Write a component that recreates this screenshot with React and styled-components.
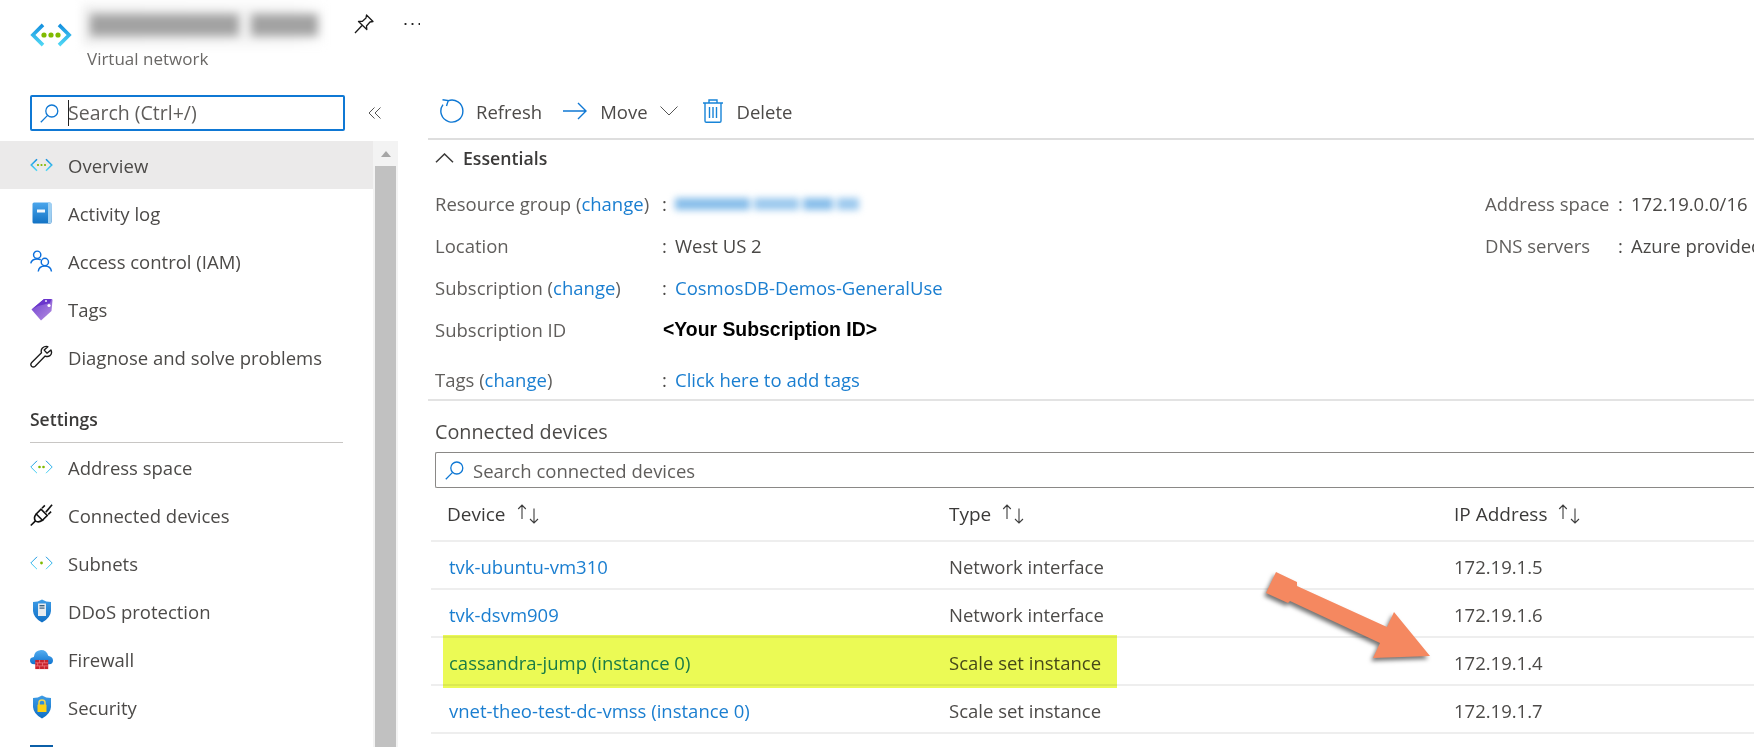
import React from "react";
import styled, { createGlobalStyle } from "styled-components";

const GlobalStyle = createGlobalStyle`
  html, body {
    margin: 0;
    padding: 0;
    background: #fff;
  }
  body {
    font-family: "Open Sans", "Noto Sans", Arial, sans-serif;
    font-size: 18.5px;
    color: #484644;
  }
  * {
    box-sizing: border-box;
  }
`;

const BLUE = "#1a7ed0";

function NetIcon({ width = 23, height = 14, weight = 1.5, dots = 3, dotSize = 1.2, spread = 4 }) {
  const id = `net-${width}-${dots}-${weight}`;
  const w = width;
  const h = height;
  const reach = h / 2;
  const offsets = dots === 3 ? [-spread, 0, spread] : dots === 2 ? [-spread / 2, spread / 2] : [0];
  const inset = weight * 0.8;
  return (
    <svg width={w} height={h} viewBox={`0 0 ${w} ${h}`}>
      <defs>
        <linearGradient id={id} x1="0" y1="0" x2="0" y2="1">
          <stop offset="0" stopColor="#1490df" />
          <stop offset="1" stopColor="#50d8f5" />
        </linearGradient>
      </defs>
      <path
        d={`M${reach} ${inset} L${inset} ${reach} L${reach} ${h - inset}`}
        fill="none"
        stroke={`url(#${id})`}
        strokeWidth={weight}
      />
      <path
        d={`M${w - reach} ${inset} L${w - inset} ${reach} L${w - reach} ${h - inset}`}
        fill="none"
        stroke={`url(#${id})`}
        strokeWidth={weight}
      />
      {offsets.map((o) => (
        <circle key={o} cx={w / 2 + o} cy={reach} r={dotSize} fill="#7fba00" />
      ))}
    </svg>
  );
}

function BookIcon() {
  return (
    <svg width="20" height="22" viewBox="0 0 20 22">
      <defs>
        <linearGradient id="book" x1="0" y1="0" x2="0" y2="1">
          <stop offset="0" stopColor="#4ba6ec" />
          <stop offset="1" stopColor="#1272c4" />
        </linearGradient>
      </defs>
      <rect x="0.5" y="0.5" width="19" height="21" rx="1.5" fill="url(#book)" />
      <rect x="16" y="1" width="3" height="20" fill="#9fd0f2" />
      <rect x="5" y="7.5" width="8" height="3" fill="#f2f8fd" />
    </svg>
  );
}

function PeopleIcon() {
  return (
    <svg width="24" height="24" viewBox="0 0 24 24" fill="none" stroke="#0b6fdc" strokeWidth="1.5">
      <circle cx="7.5" cy="5.5" r="3.8" />
      <path d="M0.8 14.5c.6-3 3.2-4.6 6.7-4.6 1.4 0 2.7.3 3.7.8" />
      <circle cx="15.5" cy="13" r="3.8" />
      <path d="M8.6 23c.4-3.6 3.2-5.8 6.9-5.8s6.5 2.2 6.9 5.8" />
    </svg>
  );
}

function TagIcon() {
  return (
    <svg width="22" height="23" viewBox="0 0 22 23">
      <defs>
        <linearGradient id="tag" x1="0" y1="0" x2="1" y2="1">
          <stop offset="0" stopColor="#6f3fd0" />
          <stop offset="1" stopColor="#b58ee0" />
        </linearGradient>
      </defs>
      <path d="M0.5 11.5 L13 1 L20.5 1 Q21.5 1 21.5 2 L20.5 13 L10 22.5 Z" fill="url(#tag)" />
      <path d="M0.5 11.5 L13 1 L20.5 1 L19 5 L7 8 Z" fill="#6a35cc" />
      <circle cx="18" cy="7.5" r="1.6" fill="#fff" />
      <circle cx="15" cy="3" r="1.1" fill="#e4d8f6" />
    </svg>
  );
}

function WrenchIcon() {
  return (
    <svg width="24" height="24" viewBox="0 0 24 24" fill="none" stroke="#1c1c1c" strokeWidth="1.4" strokeLinejoin="round">
      <path d="M18.6 1.2 L14.8 4.8 L17.8 8 L21.8 4.6 Q23.6 8.2 20.8 10.6 Q18.6 12.2 15.8 11 L5.4 21.6 Q3.4 23.2 1.6 21.6 Q0 19.8 1.8 17.8 L12 7.6 Q11 4.6 13 2.6 Q15.4 0.4 18.6 1.2 Z" />
    </svg>
  );
}

function PlugIcon() {
  return (
    <svg width="24" height="24" viewBox="0 0 24 24" fill="none" stroke="#111" strokeWidth="1.7">
      <path d="M0.8 23 L6 17.8" />
      <path d="M6.5 11 L13 17.5 Q8.5 20.5 5.6 18 Q3.4 15 6.5 11 Z" />
      <path d="M6.5 11 L11.5 6 L18 12.5 L13 17.5" />
      <path d="M16.5 9 L23 1.4" />
      <path d="M12.5 5 L15.5 2 M19 11.5 L22 8.5" />
    </svg>
  );
}

const SHIELD = "M10 0.5 Q14 3 19 3 L19 12 Q18.5 19 10 23.5 Q1.5 19 1 12 L1 3 Q6 3 10 0.5 Z";

function DdosIcon() {
  return (
    <svg width="20" height="24" viewBox="0 0 20 24">
      <defs>
        <linearGradient id="shield" x1="0" y1="0" x2="0" y2="1">
          <stop offset="0" stopColor="#3e9ce6" />
          <stop offset="1" stopColor="#0f6fc6" />
        </linearGradient>
      </defs>
      <path d={SHIELD} fill="url(#shield)" />
      <rect x="6" y="4.5" width="8" height="12.5" fill="#e6ebef" />
      <rect x="7.5" y="6" width="5" height="1.4" fill="#3b5f7c" />
      <rect x="7.5" y="8.5" width="5" height="1.2" fill="#3b5f7c" />
    </svg>
  );
}

function LockShieldIcon() {
  return (
    <svg width="20" height="24" viewBox="0 0 20 24">
      <defs>
        <linearGradient id="shield2" x1="0" y1="0" x2="0" y2="1">
          <stop offset="0" stopColor="#3e9ce6" />
          <stop offset="1" stopColor="#0f6fc6" />
        </linearGradient>
      </defs>
      <path d={SHIELD} fill="url(#shield2)" />
      <path d="M7 10 V7.5 Q7 5 10 5 Q13 5 13 7.5 V10" fill="none" stroke="#f2d64e" strokeWidth="1.5" />
      <rect x="5.5" y="9.5" width="9" height="7.5" rx="0.6" fill="#fcd116" />
    </svg>
  );
}

function FirewallIcon() {
  return (
    <svg width="24" height="21" viewBox="0 0 24 21">
      <defs>
        <linearGradient id="cloud" x1="0" y1="0" x2="0" y2="1">
          <stop offset="0" stopColor="#55aef0" />
          <stop offset="1" stopColor="#0f74d0" />
        </linearGradient>
      </defs>
      <path d="M4.5 15.5 Q0 15 0 11.5 Q0 8.5 4 8 Q4.5 1 11.5 0.5 Q17.5 0.5 19 6.5 Q24 7.5 24 11.5 Q24 15 20 15.5 Z" fill="url(#cloud)" />
      <rect x="5.5" y="11" width="13.5" height="9.5" fill="#c8232c" />
      <path d="M5.5 14 H19 M5.5 17.2 H19 M10 11 V14 M15 11 V14 M8 14 V17.2 M13 14 V17.2 M10 17.2 V20.5 M15 17.2 V20.5" stroke="#ee7d85" strokeWidth="0.8" />
    </svg>
  );
}

function SearchGlass({ size = 19 }) {
  return (
    <svg width={size} height={size} viewBox="0 0 19 19" fill="none" stroke="#0f78d4" strokeWidth="1.3">
      <circle cx="11.8" cy="7" r="6" />
      <path d="M7.6 11.4 L0.8 18.2" />
    </svg>
  );
}

function SortIcon() {
  return (
    <SortGlyph width="26" height="20" viewBox="0 0 26 20" fill="none" stroke="#3d3d3d" strokeWidth="1.1">
      <path d="M7 15 V1.5 M3.2 5 L7 1 L10.8 5" />
      <path d="M19 4.5 V19 M15 15 L19 19 L23 15" />
    </SortGlyph>
  );
}

const Page = styled.div`
  position: relative;
  width: 1754px;
  height: 747px;
  overflow: hidden;
  background: #fff;
`;

const Header = styled.header`
  display: flex;
  height: 95px;
  padding-left: 30px;
`;

const LogoSlot = styled.div`
  width: 52px;
  padding-top: 22px;
`;

const TitleBlock = styled.div`
  width: 248px;
`;

const TitleBlur = styled.div`
  display: flex;
  gap: 12px;
  height: 42px;
  margin-top: 4px;
  padding: 10px 12px 0 8px;
  background: linear-gradient(90deg, #f1f1f1, #f6f6f6 85%, #fff);
  filter: blur(5px);
`;

const Blob = styled.span`
  display: block;
  width: ${(p) => p.$w}px;
  height: ${(p) => p.$h}px;
  background: ${(p) => p.$color};
`;

const Subtitle = styled.div`
  margin: 2px 0 0 5px;
  font-size: 17px;
  line-height: 22px;
  color: #6a6866;
  white-space: nowrap;
`;

const HeaderActions = styled.div`
  display: flex;
  gap: 28px;
  padding: 14px 0 0 24px;
`;

const Dots = styled.span`
  display: block;
  width: 18px;
  height: 2px;
  margin-top: 9px;
  background: radial-gradient(circle, #222 1px, transparent 1.2px) 0 0 / 7px 2px repeat-x;
`;

const Body = styled.div`
  display: flex;
  height: 652px;
`;

const Sidebar = styled.aside`
  display: flex;
  flex-direction: column;
  width: 398px;
  flex-shrink: 0;
`;

const SearchRow = styled.div`
  display: flex;
  align-items: center;
  height: 46px;
  padding: 0 0 10px 30px;
  gap: 23px;
`;

const SearchBox = styled.div`
  display: flex;
  align-items: center;
  width: 315px;
  height: 36px;
  padding-left: 8px;
  border: 2px solid #0f78d4;
  border-radius: 2px;
  color: #5f5d5b;
  font-size: 19.5px;
  line-height: 30px;
`;

const Caret = styled.span`
  display: block;
  width: 1px;
  height: 26px;
  margin: 0 -1px 0 9px;
  background: #222;
`;

const NavWrap = styled.div`
  display: flex;
  flex: 1;
  min-height: 0;
`;

const Nav = styled.nav`
  width: 373px;
`;

const NavRow = styled.div`
  display: flex;
  align-items: center;
  height: 48px;
  padding-left: 30px;
  background: ${(p) => (p.$active ? "#ebeaea" : "transparent")};
  color: #4c4a48;
  white-space: nowrap;
`;

const NavIconSlot = styled.span`
  display: flex;
  justify-content: center;
  align-items: center;
  width: 23px;
  margin-right: 15px;
`;

const NavHeading = styled.div`
  height: 62px;
  margin: 0 30px;
  padding-top: 26px;
  border-bottom: 1px solid #c8c6c4;
  font-size: 17.5px;
  font-weight: 600;
  line-height: 24px;
  color: #3b3a39;
`;

const CutIcon = styled.span`
  display: block;
  width: 23px;
  height: 20px;
  border-top: 2px solid #0b5fa8;
  background: #1d7fd2;
`;

const ScrollTrack = styled.div`
  display: flex;
  flex-direction: column;
  align-items: center;
  width: 25px;
  background: #f3f3f3;
  padding: 0 2px;
`;

const ScrollUp = styled.div`
  height: 25px;
  padding-top: 10px;
  &::before {
    content: "";
    display: block;
    border-left: 5.5px solid transparent;
    border-right: 5.5px solid transparent;
    border-bottom: 6px solid #a6a6a6;
  }
`;

const ScrollThumb = styled.div`
  flex: 1;
  width: 100%;
  background: #c1c1c1;
`;

const Main = styled.main`
  flex: 1;
  min-width: 0;
  margin-left: 30px;
`;

const Toolbar = styled.div`
  display: flex;
  align-items: center;
  height: 45px;
  padding: 0 0 11px 12px;
  border-bottom: 2px solid #dedede;
`;

const ToolButton = styled.div`
  display: flex;
  align-items: center;
  gap: ${(p) => p.$gap || 12}px;
  margin-right: ${(p) => p.$after || 0}px;
  color: #4c4a48;
`;

const Essentials = styled.section`
  height: 261px;
  padding-left: 7px;
  border-bottom: 2px solid #e3e3e3;
`;

const EssentialsHead = styled.div`
  display: flex;
  align-items: center;
  gap: 9px;
  height: 36px;
  font-weight: 600;
  font-size: 17.7px;
  color: #3b3a39;
`;

const EssentialsBody = styled.div`
  display: flex;
  padding-top: 7px;
`;

const DetailColumn = styled.div`
  display: grid;
  grid-template-columns: ${(p) => p.$label}px 13px auto;
  grid-auto-rows: 41.75px;
  align-items: center;
  width: ${(p) => p.$width};
  white-space: nowrap;
`;

const Label = styled.div`
  color: #605e5c;
  margin-top: ${(p) => (p.$low ? "17px" : 0)};
`;

const Colon = styled.div`
  color: #4c4a48;
  margin-top: ${(p) => (p.$low ? "17px" : 0)};
`;

const Value = styled.div`
  color: #4a4846;
  margin-top: ${(p) => (p.$low ? "17px" : 0)};
`;

const BoldId = styled.div`
  grid-column: 2 / 4;
  font-family: "Liberation Sans", Arial, sans-serif;
  font-weight: 700;
  font-size: 19.4px;
  color: #000;
  margin-left: 1px;
`;

const Link = styled.span`
  color: ${BLUE};
`;

const ValueBlur = styled.div`
  display: flex;
  gap: 4px;
  filter: blur(3.5px);
  width: 195px;
`;

const Devices = styled.section`
  padding-left: 3px;
`;

const DevicesTitle = styled.div`
  height: 43px;
  padding: 19px 0 0 4px;
  line-height: 24px;
  font-size: 19.8px;
  color: #4c4a48;
  margin-bottom: 8px;
`;

const DeviceSearch = styled.div`
  display: flex;
  align-items: center;
  gap: 9px;
  height: 36px;
  margin-left: 4px;
  padding-left: 9px;
  border: 1px solid #8a8886;
  border-right: 0;
  border-radius: 2px 0 0 2px;
  color: #605e5c;
`;

const Table = styled.div`
  position: relative;
`;

const TableRow = styled.div`
  display: grid;
  grid-template-columns: 502px 505px 1fr;
  align-items: center;
  height: ${(p) => (p.$head ? 54 : 48)}px;
  padding: ${(p) => (p.$head ? 0 : "2px")} 0 0 16px;
  border-bottom: 2px solid #eeeeee;
  white-space: nowrap;
  color: #4c4a48;
`;

const HeadCell = styled.div`
  display: flex;
  align-items: center;
  gap: 9px;
  font-size: 19px;
  font-weight: 500;
  color: #3b3a39;
`;

const SortGlyph = styled.svg`
  flex-shrink: 0;
`;

const DeviceLink = styled(Link)`
  padding-left: 2px;
`;

const Highlight = styled.div`
  position: absolute;
  top: 147px;
  left: 12px;
  width: 674px;
  height: 53px;
  background: #ebfa55;
  mix-blend-mode: multiply;
  pointer-events: none;
`;

const Arrow = styled.svg`
  position: absolute;
  left: 1256px;
  top: 565px;
  filter: drop-shadow(-2px 3px 2px rgba(0, 0, 0, 0.55));
`;

const navTop = [
  { label: "Overview", icon: <NetIcon width={23} height={14} weight={1.6} dots={3} dotSize={1.1} spread={3.5} />, active: true },
  { label: "Activity log", icon: <BookIcon /> },
  { label: "Access control (IAM)", icon: <PeopleIcon /> },
  { label: "Tags", icon: <TagIcon /> },
  { label: "Diagnose and solve problems", icon: <WrenchIcon /> },
];

const navSettings = [
  { label: "Address space", icon: <NetIcon width={23} height={14} weight={1} dots={2} dotSize={1.3} spread={4} /> },
  { label: "Connected devices", icon: <PlugIcon /> },
  { label: "Subnets", icon: <NetIcon width={23} height={14} weight={1} dots={1} dotSize={1.4} /> },
  { label: "DDoS protection", icon: <DdosIcon /> },
  { label: "Firewall", icon: <FirewallIcon /> },
  { label: "Security", icon: <LockShieldIcon /> },
];

const devices = [
  { name: "tvk-ubuntu-vm310", type: "Network interface", ip: "172.19.1.5" },
  { name: "tvk-dsvm909", type: "Network interface", ip: "172.19.1.6" },
  { name: "cassandra-jump (instance 0)", type: "Scale set instance", ip: "172.19.1.4" },
  { name: "vnet-theo-test-dc-vmss (instance 0)", type: "Scale set instance", ip: "172.19.1.7" },
];

export default function App() {
  return (
    <Page>
      <GlobalStyle />
      <Header>
        <LogoSlot>
          <NetIcon width={42} height={26} weight={3.6} dots={3} dotSize={2.6} spread={7} />
        </LogoSlot>
        <TitleBlock>
          <TitleBlur>
            <Blob $w={150} $h={22} $color="#a2a2a2" />
            <Blob $w={68} $h={22} $color="#a2a2a2" />
          </TitleBlur>
          <Subtitle>Virtual network</Subtitle>
        </TitleBlock>
        <HeaderActions>
          <svg width="20" height="20" viewBox="0 0 20 20" fill="none" stroke="#1a1a1a" strokeWidth="1.3" strokeLinejoin="round">
            <path d="M12.5 1 L19 7.5 L16 8 L12.5 12 L12.8 15.5 L4.5 7.5 L8.2 7.4 L12 4 Z" />
            <path d="M8 11.5 L1 19" />
          </svg>
          <Dots />
        </HeaderActions>
      </Header>
      <Body>
        <Sidebar>
          <SearchRow>
            <SearchBox>
              <SearchGlass />
              <Caret />
              <span>Search (Ctrl+/)</span>
            </SearchBox>
            <svg width="14" height="12" viewBox="0 0 14 12" fill="none" stroke="#555" strokeWidth="1">
              <path d="M6.5 0.5 L1 6 L6.5 11.5 M12.5 0.5 L7 6 L12.5 11.5" />
            </svg>
          </SearchRow>
          <NavWrap>
            <Nav>
              {navTop.map((item) => (
                <NavRow key={item.label} $active={item.active}>
                  <NavIconSlot>{item.icon}</NavIconSlot>
                  {item.label}
                </NavRow>
              ))}
              <NavHeading>Settings</NavHeading>
              {navSettings.map((item) => (
                <NavRow key={item.label}>
                  <NavIconSlot>{item.icon}</NavIconSlot>
                  {item.label}
                </NavRow>
              ))}
              <NavRow>
                <NavIconSlot>
                  <CutIcon />
                </NavIconSlot>
              </NavRow>
            </Nav>
            <ScrollTrack>
              <ScrollUp />
              <ScrollThumb />
            </ScrollTrack>
          </NavWrap>
        </Sidebar>
        <Main>
          <Toolbar>
            <ToolButton $after={21}>
              <svg width="24" height="24" viewBox="0 0 24 24" fill="none" stroke="#0f78d4" strokeWidth="1.4">
                <path d="M8 1.8 A11 11 0 1 1 3 5.6" />
                <path d="M2.5 0.8 L8.2 1.6 L6.5 7" />
              </svg>
              <span>Refresh</span>
            </ToolButton>
            <ToolButton $gap={13} $after={12}>
              <svg width="24" height="18" viewBox="0 0 24 18" fill="none" stroke="#0f78d4" strokeWidth="1.4">
                <path d="M0 9 H23 M15 1 L23 9 L15 17" />
              </svg>
              <span>Move</span>
            </ToolButton>
            <ToolButton $after={25}>
              <svg width="18" height="10" viewBox="0 0 18 10" fill="none" stroke="#555" strokeWidth="1">
                <path d="M0.5 0.5 L9 9 L17.5 0.5" />
              </svg>
            </ToolButton>
            <ToolButton $gap={14}>
              <svg width="20" height="24" viewBox="0 0 20 24" fill="none" stroke="#1784d8" strokeWidth="1.4">
                <path d="M0 4 H20 M6 4 V1 H14 V4" />
                <path d="M2 4 V22 Q2 23.3 3.3 23.3 H16.7 Q18 23.3 18 22 V4" />
                <path d="M6.5 8 V19 M10 8 V19 M13.5 8 V19" />
              </svg>
              <span>Delete</span>
            </ToolButton>
          </Toolbar>
          <Essentials>
            <EssentialsHead>
              <svg width="19" height="10" viewBox="0 0 19 10" fill="none" stroke="#3b3a39" strokeWidth="1.5">
                <path d="M1 9.3 L9.5 1 L18 9.3" />
              </svg>
              Essentials
            </EssentialsHead>
            <EssentialsBody>
              <DetailColumn $label={227} $width="1050px">
                <Label>Resource group (<Link>change</Link>)</Label>
                <Colon>:</Colon>
                <ValueBlur>
                  <Blob $w={75} $h={12} $color="#86bdea" />
                  <Blob $w={45} $h={12} $color="#9ac8ee" />
                  <Blob $w={30} $h={12} $color="#86bdea" />
                  <Blob $w={22} $h={12} $color="#9ac8ee" />
                </ValueBlur>
                <Label>Location</Label>
                <Colon>:</Colon>
                <Value>West US 2</Value>
                <Label>Subscription (<Link>change</Link>)</Label>
                <Colon>:</Colon>
                <Link>CosmosDB-Demos-GeneralUse</Link>
                <Label>Subscription ID</Label>
                <BoldId>&lt;Your Subscription ID&gt;</BoldId>
                <Label $low>Tags (<Link>change</Link>)</Label>
                <Colon $low>:</Colon>
                <Value $low><Link>Click here to add tags</Link></Value>
              </DetailColumn>
              <DetailColumn $label={133} $width="269px">
                <Label>Address space</Label>
                <Colon>:</Colon>
                <Value>172.19.0.0/16</Value>
                <Label>DNS servers</Label>
                <Colon>:</Colon>
                <Value>Azure provided</Value>
              </DetailColumn>
            </EssentialsBody>
          </Essentials>
          <Devices>
            <DevicesTitle>Connected devices</DevicesTitle>
            <DeviceSearch>
              <SearchGlass />
              <span>Search connected devices</span>
            </DeviceSearch>
            <Table>
              <TableRow $head>
                <HeadCell>Device <SortIcon /></HeadCell>
                <HeadCell>Type <SortIcon /></HeadCell>
                <HeadCell>IP Address <SortIcon /></HeadCell>
              </TableRow>
              {devices.map((d) => (
                <TableRow key={d.name}>
                  <DeviceLink>{d.name}</DeviceLink>
                  <div>{d.type}</div>
                  <div>{d.ip}</div>
                </TableRow>
              ))}
              <Highlight />
            </Table>
          </Devices>
        </Main>
      </Body>
      <Arrow width="180" height="100" viewBox="0 0 180 100">
        <polygon
          points="20,7 41,17 41,21 131,62 138,47 174,91 117,93 124,78 34,36 32,38 10,28"
          fill="#f58860"
        />
      </Arrow>
    </Page>
  );
}
